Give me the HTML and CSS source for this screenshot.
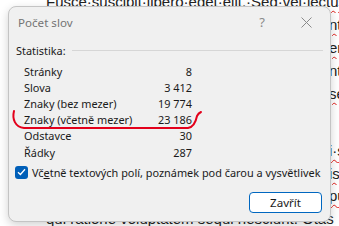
FILE: index.html
```html
<!DOCTYPE html>
<html lang="cs">
<head>
    <meta charset="UTF-8">
    <title>Počet slov</title>
    <link rel="stylesheet" href="styles.css">
</head>
<body>

    <div class="doc">
        <div class="para">
            <div class="ln">Fusce·suscipit·libero·eget·elit.·Sed·vel·<span class="err">lectus</span>·donec</div>
            <div class="ln edge"><span class="err">ntis</span>·ut·enim</div>
            <div class="ln edge"><span class="err">ert</span>·nulla</div>
            <div class="ln edge">ntatem</div>
            <div class="ln edge"><span class="err">set</span>·amet</div>
        </div>
        <div class="para second">
            <div class="ln edge"><span class="err">i·sed</span>·quia</div>
            <div class="ln edge"><span class="err">ist</span>·natus</div>
            <div class="ln edge"><span class="err">pug</span>·nam</div>
            <div class="ln">qui ratione voluptatem sequi nesciunt. Otas</div>
        </div>
    </div>

    <div class="dialog">
        <div class="titlebar">
            <span class="title">Počet slov</span>
            <span class="tb-btn help">?</span>
            <span class="tb-btn close">
                <svg width="11" height="11" viewBox="0 0 11 11">
                    <path d="M0.5 0.5 L10.5 10.5 M10.5 0.5 L0.5 10.5" stroke="#8a8a8a" stroke-width="1" fill="none"/>
                </svg>
            </span>
        </div>

        <div class="group-head">
            <span>Statistika:</span>
            <span class="group-line"></span>
        </div>

        <div class="stats">
            <span>Stránky</span><span class="val">8</span>
            <span>Slova</span><span class="val">3 412</span>
            <span>Znaky (bez mezer)</span><span class="val">19 774</span>
            <span>Znaky (včetně mezer)</span><span class="val">23 186</span>
            <span>Odstavce</span><span class="val">30</span>
            <span>Řádky</span><span class="val">287</span>
        </div>

        <label class="check">
            <span class="box">
                <svg width="9" height="8" viewBox="0 0 9 8">
                    <path d="M1 4.2 L3.4 6.5 L8 1.3" stroke="#fff" stroke-width="1.3" fill="none"/>
                </svg>
            </span>
            Vč<u>e</u>tně textových polí, poznámek pod čarou a vysvětlivek
        </label>

        <div class="actions">
            <button class="btn">Zavřít</button>
        </div>
    </div>

    <svg class="mark" width="339" height="226" viewBox="0 0 339 226">
        <path d="M14 111 C12 119, 15 127, 24 128 L188 128 C194 127, 196 121, 197 116 C198 114, 199 113, 201 112" stroke="#e3001b" stroke-width="2" fill="none" stroke-linecap="round"/>
    </svg>

</body>
</html>
```

FILE: styles.css
```css
* {
    box-sizing: border-box;
}

body {
    margin: 0;
    width: 339px;
    height: 226px;
    overflow: hidden;
    position: relative;
    background: #ffffff;
}

.doc {
    margin-top: -10px;
    padding-left: 46px;
    font-family: "Liberation Sans", Arial, sans-serif;
    font-size: 15px;
    color: #222;
    width: 339px;
    overflow: hidden;
}

.ln {
    white-space: nowrap;
    height: 23px;
    line-height: 23px;
    overflow: hidden;
}

.ln.edge {
    padding-left: 283px;
}

.second {
    margin-top: 35px;
}

.second .ln {
    height: 22.5px;
    line-height: 22.5px;
}

.err {
    text-decoration: underline wavy #e0201c;
    text-decoration-thickness: 1px;
    text-underline-offset: 3px;
}

.dialog {
    position: absolute;
    left: 8px;
    top: 6px;
    width: 323px;
    height: 216px;
    border: 1px solid #c4c4c4;
    border-radius: 8px;
    background: #f0f0f0;
    box-shadow: 0 3px 10px rgba(0, 0, 0, 0.18);
    display: flex;
    flex-direction: column;
    font-family: "Noto Sans", "Open Sans", sans-serif;
    font-size: 10.9px;
    color: #1a1a1a;
}

.titlebar {
    height: 30px;
    display: flex;
    align-items: center;
    padding-left: 9px;
    padding-right: 2px;
}

.title {
    color: #747474;
    flex: 1;
    font-size: 11.6px;
}

.tb-btn {
    width: 44px;
    display: flex;
    justify-content: center;
    align-items: center;
    color: #8a8a8a;
    font-size: 13px;
}

.group-head {
    display: flex;
    align-items: center;
    height: 16px;
    margin-top: 5px;
    padding-left: 7px;
    padding-right: 7px;
}

.group-line {
    flex: 1;
    height: 1px;
    background: #d6d6d6;
    margin-left: 6px;
}

.stats {
    display: grid;
    grid-template-columns: 1fr auto;
    grid-auto-rows: 16.2px;
    align-items: center;
    width: 168px;
    margin-left: 15px;
    margin-top: 5px;
}

.val {
    text-align: right;
}

.check {
    display: flex;
    align-items: center;
    height: 16px;
    margin-top: 4px;
    padding-left: 6px;
    white-space: nowrap;
}

.box {
    width: 13px;
    height: 13px;
    border-radius: 3px;
    background: #005fb8;
    display: flex;
    align-items: center;
    justify-content: center;
    margin-right: 4px;
}

.actions {
    display: flex;
    justify-content: flex-end;
    margin-top: 12px;
    padding-right: 8px;
}

.btn {
    width: 73px;
    height: 21px;
    border: 1.5px solid #0067c0;
    border-radius: 4px;
    background: #ffffff;
    font-family: "Noto Sans", "Open Sans", sans-serif;
    font-size: 11.6px;
    color: #1a1a1a;
    padding: 0;
}

.mark {
    position: absolute;
    left: 0;
    top: 0;
}
```
